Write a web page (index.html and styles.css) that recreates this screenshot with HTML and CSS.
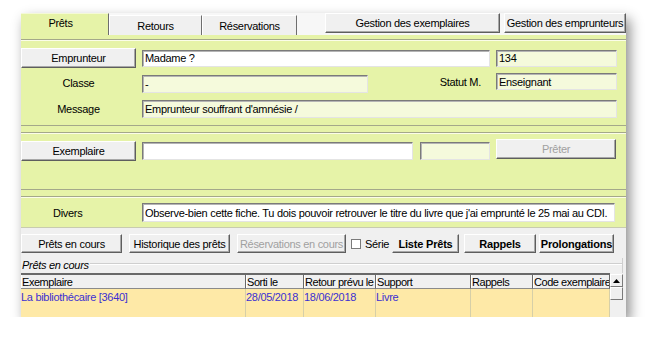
FILE: index.html
```html
<!DOCTYPE html>
<html lang="fr">
<head>
<meta charset="utf-8">
<title>Prêts</title>
<link rel="stylesheet" href="styles.css">
</head>
<body>
<div class="win">
  <div class="tabs">
    <div class="tab active w-prets">Prêts</div>
    <div class="tab w-retours">Retours</div>
    <div class="tab w-resa">Réservations</div>
    <div class="tab-gap"></div>
    <div class="btn btn-top w-gex">Gestion des exemplaires</div>
    <div class="btn btn-top w-gem">Gestion des emprunteurs</div>
  </div>

  <div class="green">
    <div class="panel p1">
      <div class="row r1">
        <div class="btn lbl-btn">Emprunteur</div>
        <div class="field white w-nom">Madame ?</div>
        <div class="field w-side">134</div>
      </div>
      <div class="row r2">
        <div class="lbl">Classe</div>
        <div class="field w-classe f-low">-</div>
        <div class="lbl-right">Statut M.</div>
        <div class="field w-side f-high">Enseignant</div>
      </div>
      <div class="row r3">
        <div class="lbl">Message</div>
        <div class="field w-msg">Emprunteur souffrant d'amnésie /</div>
      </div>
    </div>

    <div class="panel p2">
      <div class="row r-ex">
        <div class="btn lbl-btn">Exemplaire</div>
        <div class="field white w-ex">&nbsp;</div>
        <div class="field w-ex2">&nbsp;</div>
        <div class="btn disabled w-preter">Prêter</div>
      </div>
    </div>

    <div class="panel p3">
      <div class="row r-div">
        <div class="lbl lbl-divers">Divers</div>
        <div class="field white w-divers">Observe-bien cette fiche. Tu dois pouvoir retrouver le titre du livre que j'ai emprunté le 25 mai au CDI.</div>
      </div>
    </div>
  </div>

  <div class="bottom">
    <div class="actions">
      <div class="btn w-encours">Prêts en cours</div>
      <div class="btn w-histo">Historique des prêts</div>
      <div class="btn disabled w-resacours">Réservations en cours</div>
      <label class="check"><span class="box"></span>Série</label>
      <div class="btn bold flat w-liste">Liste Prêts</div>
      <div class="btn bold w-rappels">Rappels</div>
      <div class="btn bold w-prolong">Prolongations</div>
    </div>

    <div class="group">
      <div class="legend"><span>Prêts en cours</span></div>
      <div class="grid">
        <div class="th">Exemplaire</div>
        <div class="th">Sorti le</div>
        <div class="th">Retour prévu le</div>
        <div class="th">Support</div>
        <div class="th">Rappels</div>
        <div class="th">Code exemplaire</div>
        <div class="scroll">
          <div class="sb-up"><svg width="7" height="4" viewBox="0 0 7 4"><polygon points="0,4 7,4 3.5,0" fill="#000"/></svg></div>
          <div class="sb-thumb"></div>
        </div>
        <div class="td">La bibliothécaire [3640]</div>
        <div class="td">28/05/2018</div>
        <div class="td">18/06/2018</div>
        <div class="td">Livre</div>
        <div class="td"></div>
        <div class="td"></div>
      </div>
    </div>
  </div>
</div>
</body>
</html>
```

FILE: styles.css
```css
body {
  margin: 0;
  background: #ffffff;
  font-family: "Liberation Sans", Arial, sans-serif;
  font-size: 11px;
  letter-spacing: -0.3px;
  color: #000;
}

.win {
  margin: 13px 0 0 21px;
  width: 605px;
  background: #f0f0f0;
  box-shadow: 4px 6px 12px rgba(0, 0, 0, 0.45);
}

/* ---------- tabs ---------- */
.tabs {
  display: flex;
  height: 22px;
  background: #f7f7f7;
}
.tab {
  box-sizing: border-box;
  height: 20px;
  margin-top: 2px;
  display: flex;
  align-items: center;
  justify-content: center;
  background: #f0f0f0;
  border-left: 1px solid #ffffff;
  border-top: 1px solid #ffffff;
  border-right: 1px solid #6e6e6e;
}
.tab.active {
  height: 22px;
  margin-top: 0;
  padding-bottom: 3px;
  background: #e6f3a8;
  border-left: none;
  border-top: 1px solid #f4f9d8;
}
.w-prets { width: 88px; padding-right: 8px; }
.w-retours { width: 93px; }
.w-resa { width: 95px; }
.tab-gap { width: 28px; }
.btn-top { height: 20px; }
.w-gex { width: 175px; margin-right: 4px; }
.w-gem { width: 122px; }

/* ---------- buttons ---------- */
.btn {
  box-sizing: border-box;
  background: #f0f0f0;
  border: 1px solid;
  border-color: #ffffff #5e5e5e #5e5e5e #ffffff;
  box-shadow: inset -1px -1px 0 #a8a8a8;
  display: flex;
  align-items: center;
  justify-content: center;
  white-space: nowrap;
  overflow: hidden;
}
.btn.disabled { color: #a0a0a0; }
.btn.bold { font-weight: bold; letter-spacing: -0.2px; }
.btn.flat { border-color: #f0f0f0 #5e5e5e #5e5e5e #f0f0f0; }

/* ---------- green area ---------- */
.green {
  background: #e6f3a8;
  padding-top: 4px;
}
.panel {
  border-top: 1px solid #a4a88a;
  border-bottom: 1px solid #a4a88a;
  box-shadow: inset 0 1px 0 #fbfde9;
  padding-right: 9px;
}
.p1 { padding-top: 8px; padding-bottom: 7px; }
.p2 { margin-top: 6px; padding-top: 8px; padding-bottom: 28px; }
.p3 { margin-top: 6px; padding-top: 6px; padding-bottom: 5px; border-bottom-color: #c8cbb0; }

.row { display: flex; align-items: center; }
.r1 { height: 20px; }
.r2 { height: 20px; margin-top: 5px; }
.r3 { height: 18px; margin-top: 7px; }
.r-ex { height: 20px; }
.r-div { height: 19px; }

.lbl-btn { width: 115px; height: 20px; margin-right: 6px; }
.lbl {
  width: 115px;
  margin-right: 6px;
  text-align: center;
}
.lbl-divers { text-align: left; padding-left: 32px; box-sizing: border-box; }
.lbl-right {
  width: 113px;
  margin-right: 15px;
  text-align: right;
  align-self: flex-start;
  margin-top: 3px;
}

.field {
  box-sizing: border-box;
  height: 18px;
  background: #f5fadc;
  border-style: solid;
  border-width: 1px;
  border-color: #7a7a7a #e4e4e4 #e4e4e4 #7a7a7a;
  box-shadow: inset 1px 1px 0 #b4b4b4;
  padding-left: 2px;
  display: flex;
  align-items: center;
  white-space: nowrap;
  overflow: hidden;
}
.field.white { background: #ffffff; }
.f-low { align-self: flex-end; }
.f-high { align-self: flex-start; }

.w-nom { width: 348px; height: 17px; margin-right: 6px; }
.w-side { width: 121px; height: 17px; }
.w-classe { width: 226px; }
.w-msg { width: 475px; }
.w-ex { width: 271px; margin-right: 7px; }
.w-ex2 { width: 70px; margin-right: 6px; }
.w-preter { width: 120px; height: 20px; align-self: flex-start; margin-top: -2px; }
.w-divers { width: 473px; height: 19px; }

/* ---------- bottom ---------- */
.bottom {
  background: #f0f0f0;
  padding-top: 6px;
}
.actions {
  display: flex;
  align-items: center;
  height: 19px;
}
.actions .btn { height: 19px; }
.w-encours { width: 101px; margin-right: 7px; }
.w-histo { width: 101px; margin-right: 7px; }
.w-resacours { width: 109px; margin-right: 5px; }
.check {
  display: flex;
  align-items: center;
  width: 41px;
}
.box {
  box-sizing: border-box;
  width: 10px;
  height: 10px;
  background: #ffffff;
  border: 1px solid #7a7a7a;
  margin-right: 4px;
}
.w-liste { width: 67px; margin-right: 5px; }
.w-rappels { width: 72px; margin-right: 3px; }
.w-prolong { width: 75px; }

.group {
  margin-top: 5px;
  margin-right: 3px;
  border-right: 1px solid #cfcfcf;
}
.legend {
  display: flex;
  align-items: center;
  height: 13px;
  font-style: italic;
}
.legend span { padding-left: 1px; padding-right: 1px; }
.legend::after {
  content: "";
  flex: 1;
  border-top: 1px solid #cfcfcf;
  border-bottom: 1px solid #ffffff;
  margin-top: -1px;
}

.grid {
  margin-top: 2px;
  display: grid;
  grid-template-columns: 225px 58px 72px 95px 62px 77px 13px;
  grid-template-rows: 16px 28px;
}
.th {
  box-sizing: border-box;
  background: #f0f0f0;
  border-top: 2px solid #696969;
  border-right: 1px solid #696969;
  border-bottom: 1px solid #8a8a8a;
  box-shadow: inset 1px 0 0 #ffffff;
  padding-left: 1px;
  letter-spacing: -0.45px;
  display: flex;
  align-items: center;
  white-space: nowrap;
  overflow: hidden;
}
.td {
  box-sizing: border-box;
  background: #fee9a7;
  border-right: 1px solid #d6cfa8;
  color: #3b30d2;
  padding-top: 2px;
  white-space: nowrap;
  overflow: hidden;
}
.scroll {
  grid-row: 1 / 3;
  grid-column: 7;
  background: #f0f0f0;
  padding-top: 1px;
}
.sb-up, .sb-thumb {
  box-sizing: border-box;
  border: 1px solid;
  border-color: #ffffff #7a7a7a #7a7a7a #ffffff;
  background: #f0f0f0;
}
.sb-up {
  height: 13px;
  display: flex;
  align-items: center;
  justify-content: center;
}
.sb-thumb { height: 13px; }
```
